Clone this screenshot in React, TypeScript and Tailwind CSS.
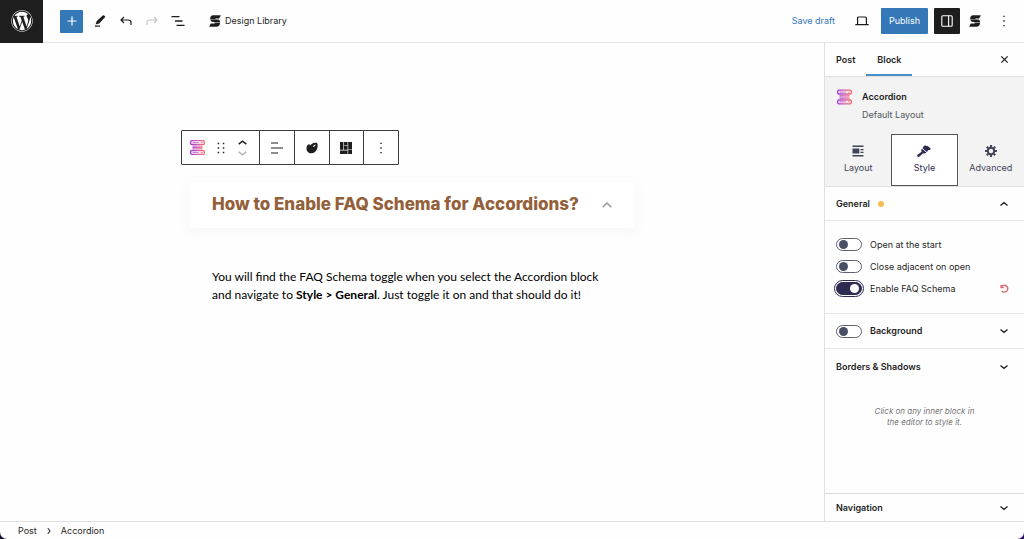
import React, {useState} from "react";
import {FaWordpress} from "react-icons/fa";

type IconProps = {className?: string};

function StackableLogo({className = ""}: IconProps) {
  return (
    <svg viewBox="0 0 24 24" className={className} fill="currentColor" aria-hidden="true">
      <path d="M7.5 .6H23.6L20.6 6.8H12.5L14 8.6H3C1.4 5.4 3.4 1.6 7.5 .6Z" />
      <path d="M2.6 9.2H18.6C20.8 10.4 22 11.8 22.4 14.2H8C5 13.8 3 12.2 2.6 9.2Z" />
      <path d="M10 14.8H22.4C22.4 19 19.6 23.2 15 23.4H.4L3.4 17H12.4Z" />
    </svg>
  );
}

function AccordionIcon({className = ""}: IconProps) {
  return (
    <svg viewBox="0 0 30 30" className={className} fill="none" aria-hidden="true">
      <defs>
        <linearGradient id="accordion-gradient" gradientUnits="userSpaceOnUse" x1="0" y1="0" x2="30" y2="0">
          <stop offset="0" stopColor="#9a35dc" />
          <stop offset=".5" stopColor="#d45cb4" />
          <stop offset="1" stopColor="#f6705e" />
        </linearGradient>
      </defs>
      <g stroke="url(#accordion-gradient)" strokeWidth="2.6">
        <rect x="1.4" y="1.4" width="27.2" height="7.6" rx="2" />
        <rect x="1.4" y="21" width="27.2" height="7.6" rx="2" />
        <path d="M5 5.2H18M5 24.81H18" strokeWidth="1.6" />
        <path d="M21.5 4L23.5 6L25.5 4M21.5 26L23.5 24L25.5 26" strokeWidth="1.8" />
        <path d="M5 12.4H25M5 15.01H25M5 17.6H25" strokeWidth="1.8" />
      </g>
    </svg>
  );
}

function Chevron({className = ""}: IconProps) {
  return (
    <svg viewBox="0 0 10 10" className={className} fill="none" stroke="currentColor" strokeWidth="1.3" aria-hidden="true">
      <path d="M1.5 3.5L5 6.3L8.5 3.5" />
    </svg>
  );
}

function Dots({className = ""}: IconProps) {
  return (
    <svg viewBox="0 0 12 12" className={className} fill="currentColor" aria-hidden="true">
      <path d="M5.3 .7H6.7V2.1H5.3ZM5.3 5.3H6.7V6.7H5.3ZM5.3 9.9H6.7V11.3H5.3Z" />
    </svg>
  );
}

function Toggle({label, checked, onChange, bold}: {label: string; checked: boolean; onChange: () => void; bold?: boolean}) {
  return (
    <label className="flex items-center gap-2">
      <input
        type="checkbox"
        checked={checked}
        onChange={onChange}
        className="flex h-[13px] w-[26px] shrink-0 appearance-none items-center rounded-full border border-[#5d6273] bg-white px-[2px] before:size-[9px] before:rounded-full before:bg-[#4a5063] checked:justify-end checked:border-[#2d2b52] checked:bg-[#2d2b52] checked:outline checked:outline-offset-1 checked:outline-[#2d2b52] checked:before:bg-white"
      />
      <span className={bold ? "font-semibold" : ""}>{label}</span>
    </label>
  );
}

function Header() {
  return (
    <header className="flex h-[43px] items-center border-b border-[#e6e6e6]">
      <a href="#" aria-label="View posts" className="flex h-[43px] w-[43px] items-center justify-center bg-[#1e1e1e] text-white">
        <FaWordpress size={22} />
      </a>
      <button aria-label="Add block" className="ml-[17px] flex size-[23px] items-center justify-center rounded-[1px] bg-[#3578b8] text-white">
        <svg viewBox="0 0 10 10" className="size-[10px]" stroke="currentColor" strokeWidth="1.2">
          <path d="M5 .5V9.5M.5 5H9.5" />
        </svg>
      </button>
      <div className="ml-[10px] flex items-center gap-3">
        <button aria-label="Tools" className="flex size-[14px] items-center justify-center">
          <svg viewBox="0 0 12 12" className="size-3" fill="currentColor">
            <path d="M9 .3Q9.5 0 10 .4L11 1.3Q11.4 1.8 11 2.3L5.2 8.4L1.6 9.6L2.6 6.3ZM1 10.6H6V11.8H1Z" />
          </svg>
        </button>
        <button aria-label="Undo" className="flex size-[14px] items-center justify-center">
          <svg viewBox="0 0 12 10" className="h-[10px] w-3" fill="none" stroke="currentColor" strokeWidth="1.2">
            <path d="M4 1L1 4L4 7M1 4H8Q11 4 11 6.5V9" />
          </svg>
        </button>
        <button aria-label="Redo" className="flex size-[14px] items-center justify-center text-[#c4c4c4]">
          <svg viewBox="0 0 12 10" className="h-[10px] w-3" fill="none" stroke="currentColor" strokeWidth="1.2">
            <path d="M8 1L11 4L8 7M11 4H4Q1 4 1 6.5V9" />
          </svg>
        </button>
        <button aria-label="Document overview" className="flex size-[14px] items-center justify-center">
          <svg viewBox="0 0 14 12" className="h-3 w-[14px]" stroke="currentColor" strokeWidth="1.3">
            <path d="M.5 1.7H8.5M4 6H11.5M5.5 10.3H13.5" />
          </svg>
        </button>
      </div>
      <button className="ml-6 flex items-center gap-1">
        <StackableLogo className="size-3" />
        Design Library
      </button>
      <div className="ml-auto flex items-center pr-[14px]">
        <button className="text-[#3578b8]">Save draft</button>
        <button aria-label="Preview" className="ml-5">
          <svg viewBox="0 0 14 10" className="h-[10px] w-[14px]" fill="none" stroke="currentColor" strokeWidth="1.2">
            <path d="M2.6 8V2Q2.6 1 3.6 1H10.4Q11.4 1 11.4 2V8M.3 8.6H13.7" />
          </svg>
        </button>
        <button className="ml-3 h-[26px] rounded-[1px] bg-[#3578b8] px-2 text-white">Publish</button>
        <button aria-label="Settings" className="ml-[6px] flex size-[26px] items-center justify-center rounded-[1px] bg-[#1e1e1e] text-white">
          <svg viewBox="0 0 12 12" className="size-3" fill="none" stroke="currentColor" strokeWidth="1.1">
            <rect x=".8" y=".8" width="10.4" height="10.4" rx="1" />
            <path d="M7.6 1V11" />
          </svg>
        </button>
        <button aria-label="Stackable settings" className="ml-[9px]">
          <StackableLogo className="size-3" />
        </button>
        <button aria-label="Options" className="ml-[17px]">
          <Dots className="size-3" />
        </button>
      </div>
    </header>
  );
}

function Toolbar() {
  return (
    <div className="-ml-2 flex h-[35px] w-[218px] divide-x divide-[#3c3c3c] rounded-[1px] border border-[#3c3c3c] bg-white">
      <div className="flex w-[78px] items-center pl-2">
        <button aria-label="Accordion">
          <AccordionIcon className="size-[15px]" />
        </button>
        <button aria-label="Drag" className="ml-3">
          <svg viewBox="0 0 8 12" className="h-3 w-2" fill="currentColor">
            <path d="M.7 .7H2.2V2.2H.7ZM5.8 .7H7.3V2.2H5.8ZM.7 5.2H2.2V6.7H.7ZM5.8 5.2H7.3V6.7H5.8ZM.7 9.7H2.2V11.2H.7ZM5.8 9.7H7.3V11.2H5.8Z" />
          </svg>
        </button>
        <div className="ml-3 flex flex-col">
          <button aria-label="Move up">
            <Chevron className="size-[11px] rotate-180" />
          </button>
          <button aria-label="Move down" className="text-[#b5b5b5]">
            <Chevron className="size-[11px]" />
          </button>
        </div>
      </div>
      <button aria-label="Align" className="flex flex-1 items-center justify-center">
        <svg viewBox="0 0 12 12" className="size-3" stroke="currentColor" strokeWidth="1.2">
          <path d="M0 1H7M0 6H12M0 11H7" />
        </svg>
      </button>
      <button aria-label="Design" className="flex flex-1 items-center justify-center">
        <svg viewBox="0 0 12 12" className="size-3" fill="currentColor">
          <path fillRule="evenodd" d="M5.6 1.9C7.4 .8 9.8 .5 11 1.1C11.9 2.4 11.8 4.6 11.3 6.2C10.4 9.4 7.8 11.4 4.9 11.2C2.1 11 .2 8.6 .5 5.9C.7 4 1.6 2.8 2.7 2.3C3.5 2.1 3.9 2.8 4 3.5C4.6 3.1 4.9 2.3 5.6 1.9ZM9.6 2.5C8.6 2.4 7.2 3.4 7 4.9C8.3 5 9.6 4 9.6 2.5Z" />
        </svg>
      </button>
      <button aria-label="Layouts" className="flex flex-1 items-center justify-center">
        <svg viewBox="0 0 12 12" className="size-3" fill="currentColor">
          <path d="M0 0H3.4V7.8H0ZM4 0H7.6V3.2H4ZM8.2 0H12V7.4H8.2ZM4 3.8H7.6V7.8H4ZM0 8.4H7.6V12H0ZM8.2 8H12V12H8.2Z" />
        </svg>
      </button>
      <button aria-label="More" className="flex flex-1 items-center justify-center">
        <Dots className="size-3" />
      </button>
    </div>
  );
}

function Sidebar() {
  const [open, setOpen] = useState(false);
  const [adjacent, setAdjacent] = useState(false);
  const [schema, setSchema] = useState(true);
  const [background, setBackground] = useState(false);

  return (
    <aside className="flex w-[200px] shrink-0 flex-col border-l border-[#e0e0e0]">
      <div className="flex h-[34px] items-stretch border-b border-[#e0e0e0] pr-[15px] font-semibold">
        <button className="px-[11px]">Post</button>
        <button className="border-y-2 border-t-transparent border-b-[#4a90c8] px-[11px]">Block</button>
        <button aria-label="Close settings" className="ml-auto">
          <svg viewBox="0 0 10 10" className="size-[9px]" stroke="currentColor" strokeWidth="1.4">
            <path d="M1.5 1.5L8.5 8.5M8.5 1.5L1.5 8.5" />
          </svg>
        </button>
      </div>

      <div className="flex flex-col border-b border-[#e0e0e0] bg-[#f3f3f3]">
        <div className="flex gap-[10px] px-3 pt-[11px] pb-[10px]">
          <AccordionIcon className="h-[18px] w-[15px]" />
          <div className="leading-[18px]">
            <h2 className="font-semibold">Accordion</h2>
            <p className="text-[#50575e]">Default Layout</p>
          </div>
        </div>
        <div className="grid h-[52px] grid-cols-3 text-[#3f4458]">
          <button className="flex flex-col items-center justify-center gap-1">
            <svg viewBox="0 0 12 12" className="size-3" fill="currentColor">
              <path d="M.5 .5H11.5V2H.5ZM.5 3.4H7.3V8.6H.5ZM8.5 4H11.5V5.2H8.5ZM8.5 6.8H11.5V8H8.5ZM.5 10H11.5V11.5H.5Z" />
            </svg>
            Layout
          </button>
          <button className="flex flex-col items-center justify-center gap-1 border border-[#555] bg-white text-[#2d2b52]">
            <svg viewBox="0 0 14 12" className="h-3 w-[14px]" fill="currentColor">
              <path d="M6.9 .9L8.2 .2L9.7 1.3L10.2 .7L13.8 3.6L12.9 4.9L11.5 5L9.9 6.9L5.5 3.2ZM4.9 3.8L9.4 7.5C8.5 8.6 7.3 8.8 6.1 8.2L2.6 11.5C1.8 12.2 .7 12 .3 11.2C0 10.6 .2 9.9 .8 9.5L4.7 6.7C4.1 5.7 4.2 4.7 4.9 3.8Z" />
            </svg>
            Style
          </button>
          <button className="flex flex-col items-center justify-center gap-1">
            <svg viewBox="0 0 12 12" className="size-3" fill="none" stroke="currentColor">
              <circle cx="6" cy="6" r="3.2" strokeWidth="2" />
              <path d="M6 0V2M6 10V12M0 6H2M10 6H12M1.8 1.8L3.2 3.2M8.8 8.8L10.2 10.2M1.8 10.2L3.2 8.8M8.8 3.2L10.2 1.8" strokeWidth="2.2" />
            </svg>
            Advanced
          </button>
        </div>
      </div>

      <button className="flex h-[34px] items-center border-b border-[#e6e6e6] pr-[15px] pl-[11px] font-semibold">
        General
        <span className="ml-2 size-[6px] rounded-full bg-[#f5bf4f]" />
        <Chevron className="ml-auto size-[10px] rotate-180" />
      </button>
      <div className="flex flex-col gap-[7px] border-b border-[#e6e6e6] pt-4 pr-[15px] pb-[17px] pl-[11px] leading-[15px]">
        <Toggle label="Open at the start" checked={open} onChange={() => setOpen(!open)} />
        <Toggle label="Close adjacent on open" checked={adjacent} onChange={() => setAdjacent(!adjacent)} />
        <div className="flex items-center justify-between">
          <Toggle label="Enable FAQ Schema" checked={schema} onChange={() => setSchema(!schema)} />
          <button aria-label="Reset" onClick={() => setSchema(false)} className="flex text-[#dd6b70]">
            <svg viewBox="0 0 10 10" className="size-[9px]" fill="none" stroke="currentColor" strokeWidth="1.6">
              <path d="M1.2 1V4H4.2M1.6 3.6C2.6 1.4 5.2 .8 7 2C9 3.4 9.2 6.2 7.6 7.8C6 9.4 3.4 9.4 2 7.8" />
            </svg>
          </button>
        </div>
      </div>
      <div className="flex h-[35px] items-center justify-between border-b border-[#e6e6e6] pr-[15px] pl-[11px]">
        <Toggle label="Background" checked={background} onChange={() => setBackground(!background)} bold />
        <button aria-label="Expand background">
          <Chevron className="size-[10px]" />
        </button>
      </div>
      <button className="flex h-[35px] items-center justify-between pr-[15px] pl-[11px] font-semibold">
        Borders &amp; Shadows
        <Chevron className="size-[10px]" />
      </button>
      <p className="mx-auto mt-[22px] w-[110px] text-center text-[8px] leading-[11px] text-[#757575] italic">
        Click on any inner block in the editor to style it.
      </p>
      <button className="mt-auto flex h-[28px] items-center justify-between border-t border-[#dcdcdc] pr-[15px] pl-[11px] font-semibold">
        Navigation
        <Chevron className="size-[10px]" />
      </button>
    </aside>
  );
}

function App() {
  return (
    <div className="bg-linear-to-r from-[#15102a] to-[#2b0f6b]">
      <div className="flex min-h-screen flex-col rounded-b-[7px] bg-[#fefefe] font-['Inter',sans-serif] text-[9px] text-[#1e1e1e]">
        <Header />
        <div className="flex flex-1">
          <main className="flex-1 px-4 pt-[87px]">
            <div className="mx-auto max-w-[446px]">
              <Toolbar />
              <div className="mt-[17px] flex h-[46px] items-center justify-between bg-white px-[23px] shadow-[0_3px_14px_rgba(0,0,0,0.04)]">
                <h1 className="text-[17px] font-extrabold whitespace-nowrap text-[#94603a]">How to Enable FAQ Schema for Accordions?</h1>
                <button aria-label="Collapse" className="text-[#999]">
                  <svg viewBox="0 0 10 6" className="h-[6px] w-[10px]" fill="none" stroke="currentColor" strokeWidth="1.5">
                    <path d="M.7 5.3L5 1L9.3 5.3" />
                  </svg>
                </button>
              </div>
              <p className="mt-10 px-[23px] font-['Lato',sans-serif] text-[12px] leading-[18px] text-black">
                You will find the FAQ Schema toggle when you select the Accordion block and navigate to <strong>Style &gt; General</strong>. Just toggle it on and that should do it!
              </p>
            </div>
          </main>
          <Sidebar />
        </div>
        <footer className="flex h-[18px] items-center gap-2 border-t border-[#e0e0e0] pl-[18px]">
          <a href="#">Post</a>
          <Chevron className="size-[8px] -rotate-90" />
          <a href="#">Accordion</a>
        </footer>
      </div>
    </div>
  );
}

export default App;
